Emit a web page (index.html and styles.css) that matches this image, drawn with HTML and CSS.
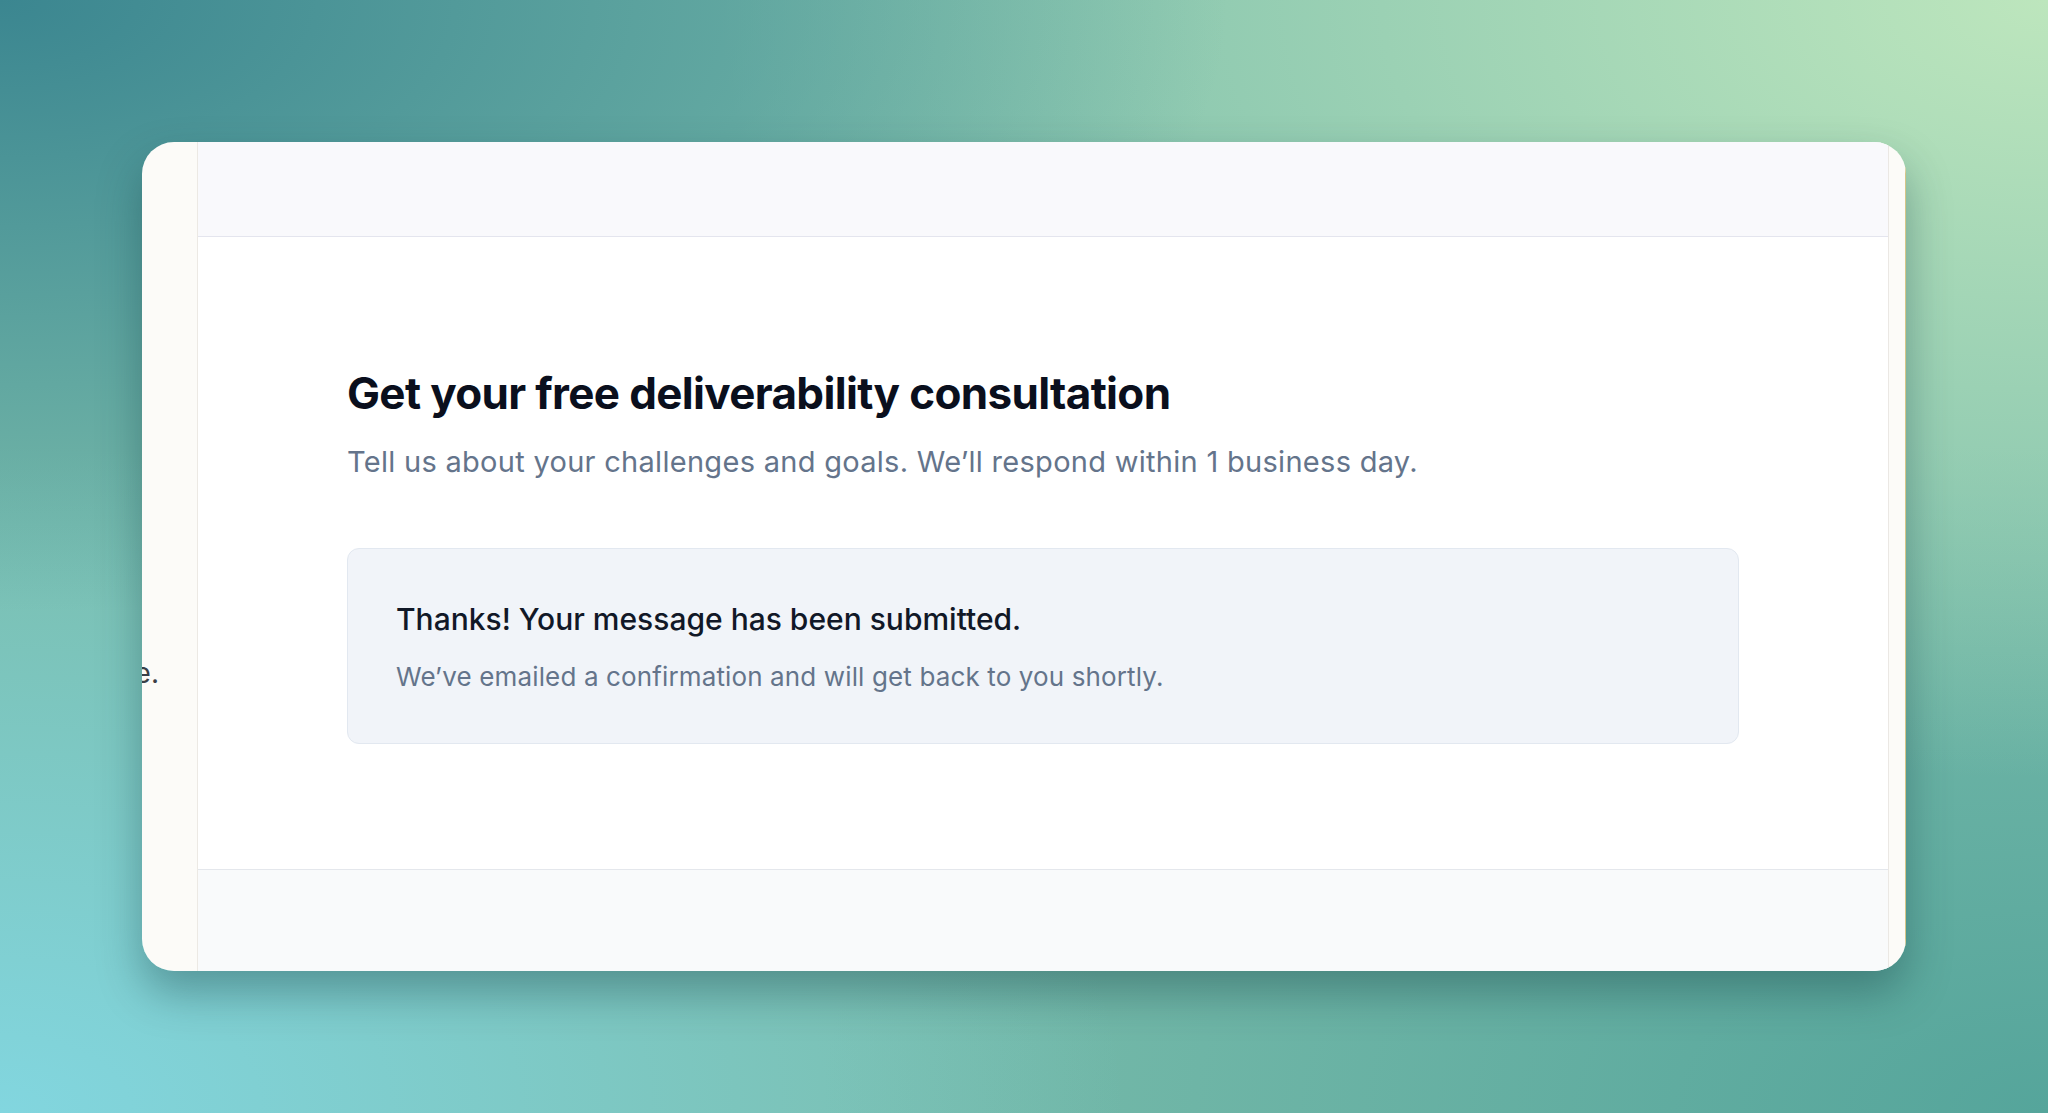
FILE: index.html
```html
<!DOCTYPE html>
<html lang="en">
<head>
    <meta charset="UTF-8">
    <meta name="viewport" content="width=device-width, initial-scale=1.0">
    <title>Free Deliverability Consultation</title>
    <link rel="stylesheet" href="styles.css">
</head>
<body>
    <div class="window">
        <!-- left rail, text of the page behind peeks through -->
        <aside class="rail rail-left">
            <p class="rail-text">We'll take it from here.</p>
        </aside>

        <main class="panel">
            <header class="panel-header"></header>

            <section class="panel-body">
                <h1 class="title">Get your free deliverability consultation</h1>
                <p class="subtitle">Tell us about your challenges and goals. We’ll respond within 1 business day.</p>

                <div class="notice">
                    <h2 class="notice-title">Thanks! Your message has been submitted.</h2>
                    <p class="notice-text">We’ve emailed a confirmation and will get back to you shortly.</p>
                </div>
            </section>

            <footer class="panel-footer"></footer>
        </main>

        <aside class="rail rail-right"></aside>
    </div>
</body>
</html>
```

FILE: styles.css
```css
html, body {
    height: 100%;
}

body {
    margin: 0;
    font-family: Inter, "Noto Sans", Arial, sans-serif;
    display: flex;
    align-items: center;
    justify-content: center;
    background:
        radial-gradient(ellipse 60% 55% at 0% 0%, #3b8690 0%, rgba(59, 134, 144, 0) 100%),
        radial-gradient(ellipse 65% 70% at 100% 0%, #bde6bd 0%, rgba(189, 230, 189, 0) 100%),
        radial-gradient(ellipse 55% 60% at 0% 100%, #82d6df 0%, rgba(130, 214, 223, 0) 100%),
        radial-gradient(ellipse 60% 60% at 100% 100%, #55a59b 0%, rgba(85, 165, 155, 0) 100%),
        #79bcab;
}

.window {
    width: 1764px;
    height: 829px;
    display: grid;
    grid-template-columns: 56px 1fr 18px;
    border-radius: 32px;
    overflow: hidden;
    box-shadow: 0 22px 44px rgba(18, 60, 66, 0.38);
}

.rail {
    background: #fcfbf8;
}

.rail-left {
    border-right: 1px solid #ece9e4;
    display: flex;
    justify-content: flex-end;
    align-items: flex-start;
    overflow: hidden;
    padding-right: 38px;
}

.rail-text {
    margin: 514px 0 0;
    font-size: 28px;
    line-height: 34px;
    color: #3b3f46;
    white-space: nowrap;
}

.rail-right {
    border-left: 1px solid #ebe8e4;
    border-right: 1px solid #d6c588;
}

.panel {
    display: flex;
    flex-direction: column;
    background: #fff;
}

.panel-header {
    height: 94px;
    background: #f9f9fc;
    border-bottom: 1px solid #e4e5ee;
}

.panel-body {
    flex: 1;
    padding: 130px 149px 0;
}

.panel-footer {
    height: 101px;
    background: #f9fafb;
    border-top: 1px solid #e4e7ec;
}

.title {
    margin: 0;
    font-size: 44px;
    line-height: 1.2;
    font-weight: 700;
    letter-spacing: -0.015em;
    color: #0a0f1d;
}

.subtitle {
    margin: 22px 0 0;
    font-size: 29px;
    line-height: 1.4;
    letter-spacing: 0.01em;
    color: #64748b;
}

.notice {
    margin-top: 66px;
    padding: 51px 48px 47px;
    background: #f1f4f9;
    border: 1px solid #e2e8f0;
    border-radius: 12px;
}

.notice-title {
    margin: 0;
    font-size: 30px;
    line-height: 1.3;
    font-weight: 500;
    color: #111827;
}

.notice-text {
    margin: 20px 0 0;
    font-size: 26px;
    line-height: 1.4;
    letter-spacing: 0.005em;
    color: #64748b;
}
```
